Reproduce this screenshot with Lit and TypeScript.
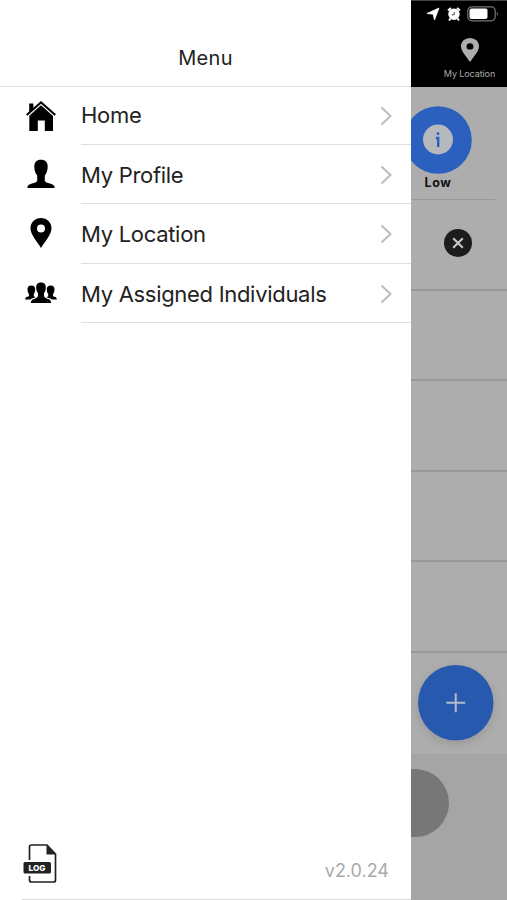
import { LitElement, html, css, svg } from "lit";
import { customElement } from "lit/decorators.js";

const glyphs = {
  home: svg`<path d="M3.200 2.500h4.200v5L3.200 11.200z"/><path d="M0 13.200 15 0 30 13.200l-1.400 1.500L15 2.800 1.400 14.700z"/><path d="M15 4.200 27 15v15h-8.200V19.500h-7V30H3.300V14.700z"/>`,
  person: svg`<path d="M15 .8c4.500 0 6.900 2.600 6.700 7.300-.2 3.500-1 6.500-2.900 8.500v5.200c.5 1.500 2.400 2 5.200 2.800 3 .8 4.500 1.700 4.700 4.400H1.300c.2-2.700 1.700-3.600 4.700-4.400 2.800-.8 4.700-1.300 5.200-2.800v-5.200C9.300 14.600 8.500 11.600 8.300 8.100 8.100 3.400 10.500.8 15 .8z"/>`,
  pin: svg`<path fill-rule="evenodd" d="M15 0c6 0 10.500 4.500 10.500 10.200C25.500 16.500 19.500 22.500 15 30 10.500 22.500 4.500 16.500 4.500 10.200 4.500 4.500 9 0 15 0zm0 6.500a4 4 0 1 0 0 8 4 4 0 0 0 0-8z"/>`,
  people: svg`<path d="M15 4.500c3.500 0 5 2.200 4.800 5.400-.1 2.300-.8 4-1.800 5.200v3c.4 1.700 2 2.300 4 2.900 2 .6 3 1.600 3.200 4H4.800c.2-2.400 1.200-3.400 3.200-4 2-.6 3.600-1.200 4-2.900v-3c-1-1.200-1.700-2.900-1.800-5.200C10 6.700 11.500 4.500 15 4.500z"/><path d="M5.300 7.500c2.900 0 4.100 1.900 3.900 4.300-.1 2-.6 3.200-1.400 4.200v1.700c.2.800 1 1.100 2 1.500-2.500.6-4.500 1-5.500 2.300H-.9c.2-1.800 1-2.400 2.400-2.800C2.800 18.300 3 18 3 17.500V16c-.9-1-1.400-2.200-1.500-4.200C1.300 9.400 2.400 7.500 5.300 7.500zM24.700 7.500c-2.900 0-4.100 1.900-3.900 4.300.1 2 .6 3.200 1.400 4.200v1.700c-.2.800-1 1.100-2 1.500 2.500.6 4.500 1 5.500 2.300h5.200c-.2-1.800-1-2.400-2.400-2.800-1.300-.4-1.500-.7-1.500-1.200V16c.9-1 1.400-2.200 1.500-4.200.2-2.400-.9-4.300-3.800-4.300z"/>`,
};

const entries = [
  { icon: glyphs.home, label: "Home" },
  { icon: glyphs.person, label: "My Profile" },
  { icon: glyphs.pin, label: "My Location" },
  { icon: glyphs.people, label: "My Assigned Individuals" },
];

@customElement("menu-drawer")
export class MenuDrawer extends LitElement {
  static styles = css`
    :host { display: flex; flex-direction: column; background: #fff; color: #222; height: 900px; }
    svg { display: block; overflow: visible; }
    header { box-sizing: border-box; height: 87px; border-bottom: 1px solid #e4e4e4; padding-top: 31px;
      text-align: center; font-size: 20px; line-height: 54px; letter-spacing: 0.3px; }
    .row { display: flex; height: 59.33px; padding-left: 25.500px; }
    .row:first-of-type { height: 58px; }
    .icon { box-sizing: border-box; width: 30px; margin-right: 25.500px; padding-bottom: 1px; display: flex; align-items: center; }
    .body { flex: 1; box-sizing: border-box; display: flex; align-items: center; justify-content: space-between;
      border-bottom: 1px solid #dedede; padding: 2px 19px 0 0; font-size: 22px; letter-spacing: -0.3px; }
    .row:first-of-type .body { padding-top: 0; }
    .row:first-of-type .label { padding-bottom: 1px; }
    .label { white-space: nowrap; }
    footer { margin-top: auto; margin-left: 22px; height: 57px; border-bottom: 1px solid #dcdcdc;
      display: flex; justify-content: space-between; padding-right: 22px; }
    .version { color: #aaa; font-size: 18px; line-height: 58px; }
    .log { font: 800 8.2px Inter, sans-serif; }
  `;
  render() {
    return html`
      <header>Menu</header>
      ${entries.map((e) => html`
        <div class="row">
          <div class="icon"><svg width="30" height="30" viewBox="0 0 30 30">${e.icon}</svg></div>
          <div class="body">
            <span class="label">${e.label}</span>
            <svg width="12" height="20" viewBox="0 0 12 20" fill="none" stroke="#bcbcbc" stroke-width="2"><path d="M1.500 1.500 10.500 10 1.500 18.500"/></svg>
          </div>
        </div>`)}
      <footer>
        <svg width="36" height="42" viewBox="0 0 36 42">
          <path d="M7.500 18V5q0-2 2-2H25l8.500 9v26q0 2-2 2h-22q-2 0-2-2v-4" fill="none" stroke="#222" stroke-width="1.700"/>
          <path d="M24.500 3 34 12.500h-9.500z" fill="#222"/>
          <rect x="1.500" y="20" width="27.500" height="11.500" rx="1.500" fill="#222"/>
          <text class="log" x="15" y="28.800" text-anchor="middle" fill="#fff">LOG</text>
        </svg>
        <span class="version">v2.0.24</span>
      </footer>`;
  }
}

@customElement("dimmed-page")
export class DimmedPage extends LitElement {
  static styles = css`
    :host { display: flex; flex-direction: column; height: 900px; overflow: hidden; background: #adadad; }
    svg { display: block; overflow: visible; }
    .bar { box-sizing: border-box; height: 86.500px; background: #000; color: #aaa; padding-top: 5px; border-top: 1px solid #444; }
    .status { display: flex; align-items: center; height: 15px; padding-left: 16px; }
    .alarm { margin: 0 6px 0 8px; }
    .place { width: 117px; display: flex; flex-direction: column; align-items: center; padding-top: 17px;
      font-size: 9px; letter-spacing: -0.1px; line-height: 12px; gap: 6px; }
    .level { box-sizing: border-box; height: 113px; width: 84px; border-bottom: 1px solid #999; padding-top: 19.500px; }
    .stack { width: 68px; margin-left: -7px; display: flex; flex-direction: column; align-items: center;
      color: #111; font-size: 12.5px; font-weight: 700; line-height: 17px; letter-spacing: 0.6px; }
    .cell { box-sizing: border-box; height: 90.4px; border-bottom: 2px solid #989898; flex: none; }
    .first { height: 91.500px; padding: 29.500px 0 0 33px; }
    .add { box-sizing: border-box; height: 101.500px; padding: 12.500px 0 0 6.500px; flex: none; }
    .plus { border-radius: 50%; box-shadow: 0 3px 10px rgba(0, 0, 0, 0.12); }
    .foot { flex: 1; background: #a5a5a5; padding-top: 15px; }
    .disc { width: 68px; height: 68px; border-radius: 50%; margin-left: -30px; background: #777; }
  `;
  render() {
    return html`
      <div class="bar">
        <div class="status">
          <svg width="12" height="12" viewBox="0 0 12 12" fill="#fff" stroke="#fff" stroke-width=".8" stroke-linejoin="round"><path d="M12 0 7.500 12 6.200 6.200 0 5.500z"/></svg>
          <svg class="alarm" width="14" height="14" viewBox="0 0 14 14"><circle cx="7" cy="7.300" r="5.700" fill="#fff"/><path d="M1 3.500 4 1M13 3.500 10 1M3.500 11.500 2 13.500M10.500 11.500 12 13.500" stroke="#fff" stroke-width="2"/><path d="M7.200 4.800v3H4.800" fill="none" stroke="#333" stroke-width=".9"/></svg>
          <svg width="32" height="16" viewBox="0 0 32 16"><rect x=".8" y=".8" width="27.400" height="14" rx="4" fill="none" stroke="#777" stroke-width="1.200"/><rect x="2.500" y="2.500" width="18" height="10.600" rx="2" fill="#fff"/><path d="M29.800 5.500q2 2.300 0 4.600z" fill="#777"/></svg>
        </div>
        <div class="place">
          <svg width="18" height="24" viewBox="4.500 0 21 30" preserveAspectRatio="none" fill="#adadad">${glyphs.pin}</svg>
          <span>My Location</span>
        </div>
      </div>
      <div class="level">
        <div class="stack">
          <svg width="68" height="68" viewBox="0 0 68 68"><circle cx="34" cy="34" r="33.800" fill="#2b60bf"/><circle cx="34" cy="33.500" r="15" fill="#b5b8bd"/><path d="M31.800 32h2.400v9M34 26.300v2.800" fill="none" stroke="#2b60bf" stroke-width="2.400"/></svg>
          <span>Low</span>
        </div>
      </div>
      <div class="cell first">
        <svg width="28" height="28" viewBox="0 0 28 28"><circle cx="14" cy="14" r="14" fill="#1c1c1c"/><path d="m9.200 9.200 9.600 9.600m0-9.600-9.600 9.600" stroke="#c4c4c4" stroke-width="2.200"/></svg>
      </div>
      <div class="cell"></div><div class="cell"></div><div class="cell"></div><div class="cell"></div>
      <div class="add">
        <svg class="plus" width="75.500" height="75.500" viewBox="0 0 76 76"><circle cx="38" cy="38" r="38" fill="#2759af"/><path d="M38 28.500v19M28.500 38h19" stroke="#b4bccb" stroke-width="2"/></svg>
      </div>
      <div class="foot"><div class="disc"></div></div>`;
  }
}

@customElement("app-root")
export class AppRoot extends LitElement {
  static styles = css`
    :host { display: grid; grid-template-columns: 411px 95.500px; height: 900px; overflow: hidden; background: #fff;
      font-family: Inter, "Liberation Sans", sans-serif; }
  `;
  render() {
    return html`<menu-drawer></menu-drawer><dimmed-page></dimmed-page>`;
  }
}
